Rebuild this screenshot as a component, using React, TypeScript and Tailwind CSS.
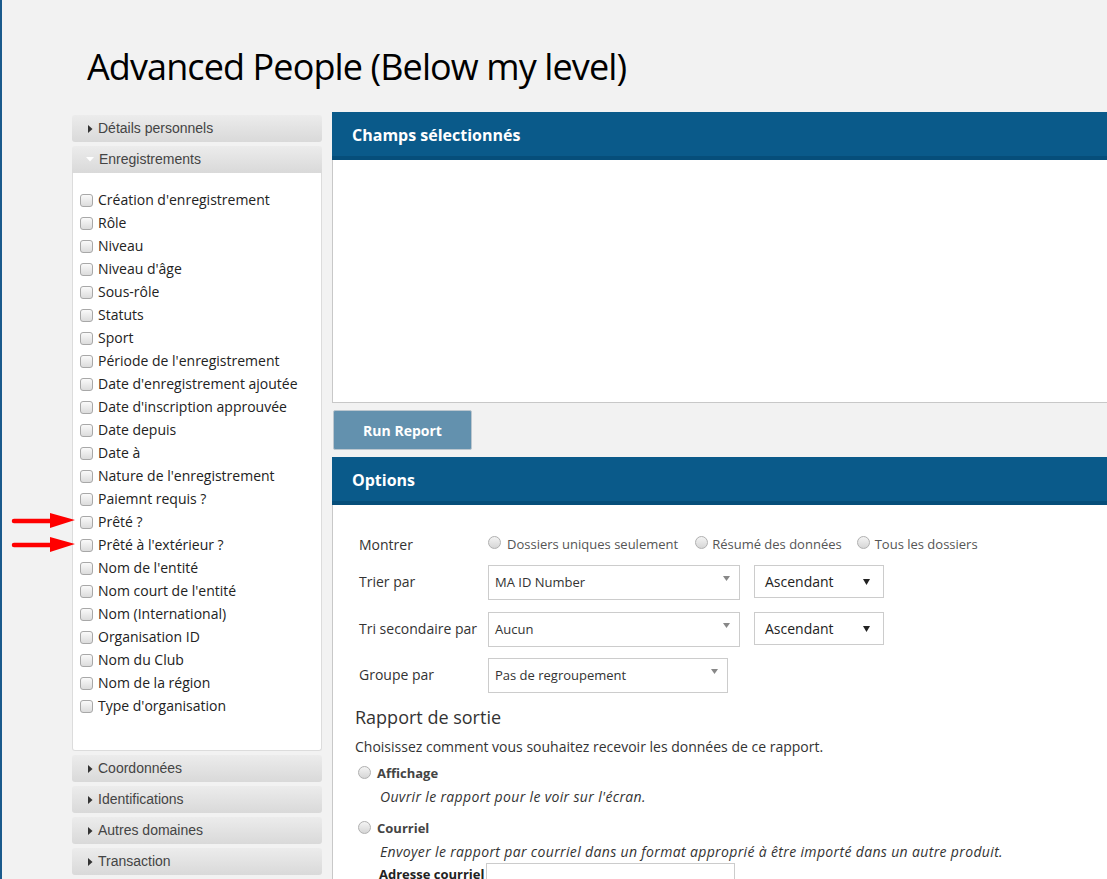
import React from "react";

const items = [
  "Création d'enregistrement",
  "Rôle",
  "Niveau",
  "Niveau d'âge",
  "Sous-rôle",
  "Statuts",
  "Sport",
  "Période de l'enregistrement",
  "Date d'enregistrement ajoutée",
  "Date d'inscription approuvée",
  "Date depuis",
  "Date à",
  "Nature de l'enregistrement",
  "Paiemnt requis ?",
  "Prêté ?",
  "Prêté à l'extérieur ?",
  "Nom de l'entité",
  "Nom court de l'entité",
  "Nom (International)",
  "Organisation ID",
  "Nom du Club",
  "Nom de la région",
  "Type d'organisation",
];

function Caret({ open }: { open?: boolean }) {
  return open ? (
    <svg width="8" height="5" viewBox="0 0 8 5" className="mr-[5px]">
      <path d="M0 0 L8 0 L4 4.5 Z" fill="#ffffff" />
    </svg>
  ) : (
    <svg width="5" height="8" viewBox="0 0 5 8" className="mr-[5px] ml-[2px]">
      <path d="M0 0 L4.5 4 L0 8 Z" fill="#333" />
    </svg>
  );
}

function AccHeader({ label, open }: { label: string; open?: boolean }) {
  return (
    <div
      className={`flex h-[27px] items-center bg-gradient-to-b from-[#ececec] to-[#d9d9d9] pl-[14px] text-[14px] text-[#444] ${
        open ? "rounded-t-[3px]" : "rounded-[3px]"
      }`}
      style={{ fontFamily: '"Liberation Sans", Arial, sans-serif' }}
    >
      <Caret open={open} />
      <span>{label}</span>
    </div>
  );
}

function Checkbox() {
  return (
    <span className="inline-block h-[13px] w-[13px] shrink-0 rounded-[3px] border border-[#a8a8a8] bg-gradient-to-b from-[#fafafa] to-[#dcdcdc]" />
  );
}

function Radio() {
  return (
    <span className="inline-block h-[13px] w-[13px] shrink-0 rounded-full border border-[#b0b0b0] bg-gradient-to-b from-[#f4f4f4] to-[#d6d6d6]" />
  );
}

function Arrow({ top }: { top: number }) {
  return (
    <svg
      className="absolute left-[8px]"
      style={{ top }}
      width="66"
      height="20"
      viewBox="0 0 66 20"
    >
      <line x1="4" y1="10" x2="44" y2="10" stroke="#f00" strokeWidth="4.5" strokeLinecap="round" />
      <path d="M40 2 L65 9 L40 17 Z" fill="#f00" />
    </svg>
  );
}

function Select({ w, h, text, dark }: { w: string; h: string; text: string; dark?: boolean }) {
  return (
    <div
      className={`flex items-center justify-between border border-[#cccccc] bg-white ${w} ${h} ${
        dark ? "pl-[10px] pr-[13px] text-[14px] text-[#222]" : "pl-[6px] pr-[9px] text-[13px] text-[#333]"
      }`}
    >
      <span>{text}</span>
      {dark ? (
        <svg width="7" height="6" viewBox="0 0 7 6">
          <path d="M0 0 L7 0 L3.5 6 Z" fill="#222" />
        </svg>
      ) : (
        <svg width="7" height="6" viewBox="0 0 7 6" className="-mt-[8px]">
          <path d="M0 0 L7 0 L3.5 5 Z" fill="#888" />
        </svg>
      )}
    </div>
  );
}

export default function App() {
  return (
    <div
      className="relative min-h-[879px] overflow-hidden border-l-2 border-[#1a5a8c] bg-[#f2f2f2] text-[#333]"
      style={{ fontFamily: '"Open Sans", "Noto Sans", sans-serif' }}
    >
      <h1 className="pl-[85px] pt-[42px] text-[36px] font-[500] leading-[50px] tracking-[-0.9px] text-black">
        Advanced People (Below my level)
      </h1>

      <div className="mt-[20px] flex items-start pl-[70px]">
        {/* Sidebar */}
        <div className="mt-[3px] flex w-[250px] shrink-0 flex-col gap-[4px]">
          <AccHeader label="Détails personnels" />
          <div>
            <AccHeader label="Enregistrements" open />
            <div className="rounded-b-[3px] border border-t-0 border-[#dcdcdc] bg-white pb-[32px] pl-[7px] pt-[16px]">
              {items.map((it) => (
                <div key={it} className="flex h-[23px] items-center gap-[5px] text-[14px] text-[#222]">
                  <Checkbox />
                  <span className="-mt-[3px]">{it}</span>
                </div>
              ))}
            </div>
          </div>
          <AccHeader label="Coordonnées" />
          <AccHeader label="Identifications" />
          <AccHeader label="Autres domaines" />
          <AccHeader label="Transaction" />
        </div>

        {/* Right column */}
        <div className="ml-[10px] w-[800px] shrink-0">
          <div className="flex h-[48px] items-center border-b-[4px] border-[#064e7a] bg-[#0a5a8a] pl-[20px] text-[16px] font-bold text-white">
            <span className="mt-[1px]">Champs sélectionnés</span>
          </div>
          <div className="h-[243px] border border-t-0 border-[#c8c8c8] bg-white" />
          <button className="ml-[1px] mt-[7px] h-[40px] w-[139px] rounded-[2px] border border-[#bcc7cf] bg-[#6391ae] text-[14px] font-bold text-white">
            Run Report
          </button>
          <div className="mt-[7px] flex h-[48px] items-center border-b-[4px] border-[#064e7a] bg-[#0a5a8a] pl-[20px] text-[16px] font-bold text-white">
            <span className="mt-[1px]">Options</span>
          </div>
          <div className="border-l border-[#c8c8c8] bg-white pb-[20px] pl-[22px] pt-[29px]">
            <div className="pl-[4px]">
              <div className="flex h-[20px] items-center">
                <span className="w-[129px] text-[14px]">Montrer</span>
                <div className="flex items-center text-[13px] text-[#555]">
                  <span className="mt-[2px]"><Radio /></span>
                  <span className="ml-[6px] mt-[2px]">Dossiers uniques seulement</span>
                  <span className="ml-[17px] mt-[2px]"><Radio /></span>
                  <span className="ml-[4px] mt-[2px]">Résumé des données</span>
                  <span className="ml-[15px] mt-[2px]"><Radio /></span>
                  <span className="ml-[5px] mt-[2px]">Tous les dossiers</span>
                </div>
              </div>
              <div className="mt-[11px] flex items-start">
                <span className="w-[129px] pt-[6px] text-[14px]">Trier par</span>
                <Select w="w-[252px]" h="h-[35px]" text="MA ID Number" />
                <div className="ml-[14px]">
                  <Select w="w-[130px]" h="h-[33px]" text="Ascendant" dark />
                </div>
              </div>
              <div className="mt-[12px] flex items-start">
                <span className="w-[129px] pt-[6px] text-[14px]">Tri secondaire par</span>
                <Select w="w-[252px]" h="h-[35px]" text="Aucun" />
                <div className="ml-[14px]">
                  <Select w="w-[130px]" h="h-[33px]" text="Ascendant" dark />
                </div>
              </div>
              <div className="mt-[11px] flex items-start">
                <span className="w-[129px] pt-[6px] text-[14px]">Groupe par</span>
                <Select w="w-[240px]" h="h-[35px]" text="Pas de regroupement" />
              </div>
            </div>
            <div className="mt-[11px] text-[18px] leading-[26px] text-[#333]">Rapport de sortie</div>
            <div className="mt-[7px] text-[14px] leading-[20px]">
              Choisissez comment vous souhaitez recevoir les données de ce rapport.
            </div>
            <div className="ml-[3px] mt-[5px] flex h-[20px] items-center gap-[6px]">
              <Radio />
              <span className="mt-[4px] text-[13px] font-bold text-[#444]">Affichage</span>
            </div>
            <div className="ml-[25px] mt-[4px] text-[14px] italic leading-[22px] tracking-[0.35px]">
              Ouvrir le rapport pour le voir sur l'écran.
            </div>
            <div className="ml-[3px] mt-[9px] flex h-[20px] items-center gap-[6px]">
              <Radio />
              <span className="mt-[4px] text-[13px] font-bold text-[#444]">Courriel</span>
            </div>
            <div className="ml-[25px] mt-[4px] text-[14px] italic leading-[22px] tracking-[0.35px]">
              Envoyer le rapport par courriel dans un format approprié à être importé dans un autre produit.
            </div>
            <div className="ml-[24px] flex items-start">
              <span className="mt-[2px] text-[13px] font-bold text-[#222]">Adresse courriel</span>
              <div className="ml-[2px] h-[30px] w-[249px] border border-[#ccc] bg-white" />
            </div>
          </div>
        </div>
      </div>

      <Arrow top={511} />
      <Arrow top={535} />
    </div>
  );
}
